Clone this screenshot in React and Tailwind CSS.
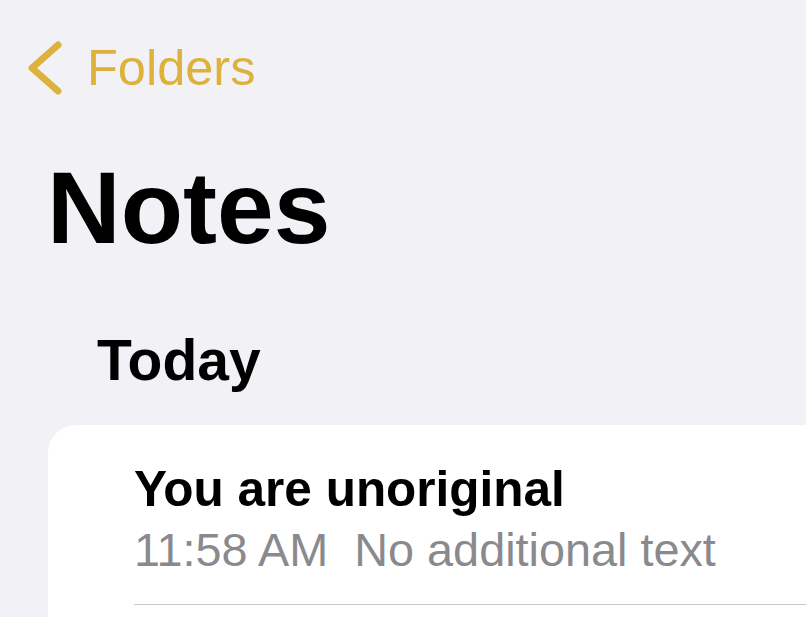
export default function App() {
  return (
    <div
      className="w-[806px] h-[617px] overflow-hidden bg-[#f2f1f6] text-black"
      style={{ fontFamily: '"Liberation Sans", Arial, sans-serif' }}
    >
      <div className="flex items-center pt-[43px] pl-[26px] h-[93px]">
        <svg width="40" height="56" viewBox="0 0 40 56" className="shrink-0">
          <path
            d="M32 5 L6 28 L32 51"
            fill="none"
            stroke="#dcb23c"
            strokeWidth="7"
            strokeLinecap="round"
            strokeLinejoin="round"
          />
        </svg>
        <span className="ml-[21px] text-[50.5px] leading-none text-[#dcb23c]">Folders</span>
      </div>

      <h1 className="mt-[64px] pl-[47px] text-[102px] leading-none font-bold">Notes</h1>

      <h2 className="mt-[73px] pl-[97px] text-[57px] leading-none font-bold">Today</h2>

      <div className="mt-[36px] ml-[48px] bg-white rounded-tl-[28px] pt-[39px] pl-[86px] h-[300px]">
        <div className="text-[49.5px] leading-none font-bold">You are unoriginal</div>
        <div className="mt-[13px] text-[46.8px] leading-none text-[#8a8a8e] whitespace-pre">
          {"11:58 AM  No additional text"}
        </div>
        <div className="mt-[31px] h-px bg-[#c6c6c8]" />
      </div>
    </div>
  );
}
